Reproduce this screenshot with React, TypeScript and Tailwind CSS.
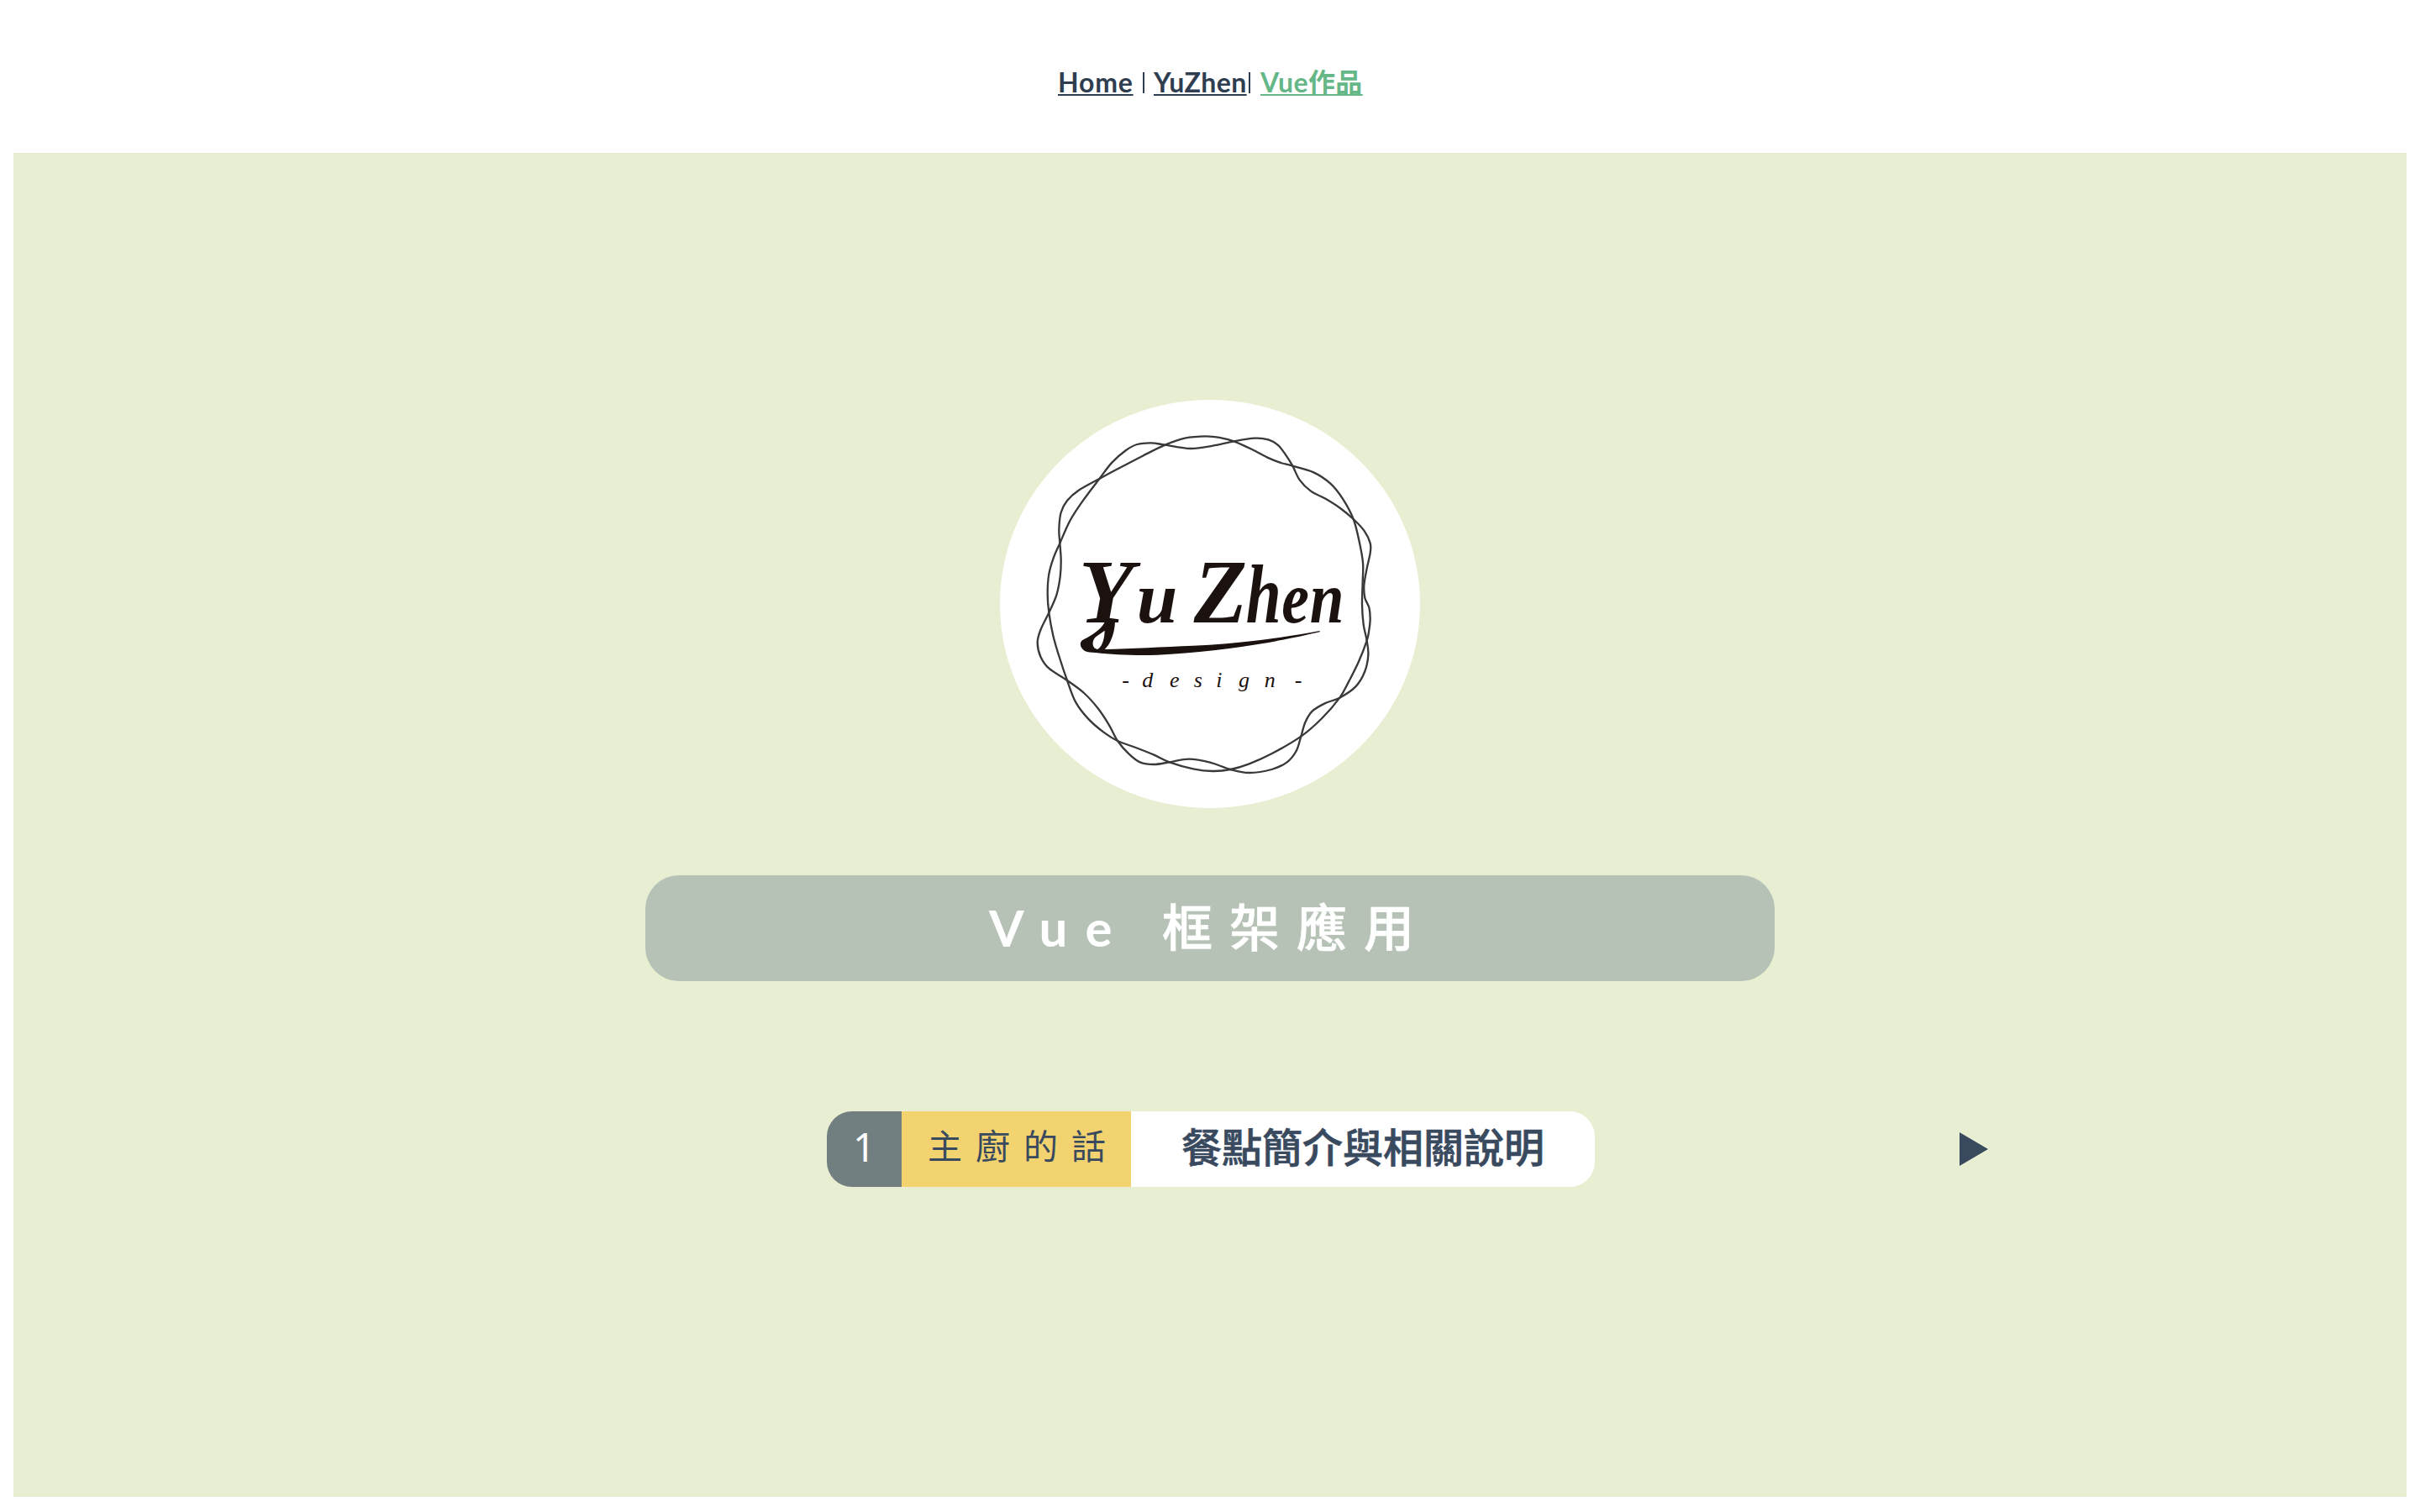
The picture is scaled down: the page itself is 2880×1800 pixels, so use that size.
const RING_ONE: [number, number][] = [
  [620, 209], [690, 185], [765, 178], [820, 184], [865, 196], [930, 225], [985, 254], [1030, 272],
  [1075, 284], [1150, 307], [1210, 347], [1255, 403], [1292, 474], [1312, 550], [1326, 630],
  [1325, 700], [1323, 780], [1328, 850], [1340, 908], [1345, 960], [1332, 1020], [1300, 1072],
  [1243, 1112], [1190, 1132], [1145, 1160], [1120, 1200], [1105, 1250], [1088, 1302], [1055, 1342],
  [1000, 1368], [920, 1380], [853, 1368], [780, 1343], [705, 1331], [635, 1342],
  [580, 1350], [530, 1342], [490, 1312], [450, 1266], [420, 1210], [380, 1150], [330, 1095],
  [270, 1050], [205, 1007], [175, 965], [164, 915], [175, 870], [205, 808], [232, 745], [245, 680],
  [248, 620], [244, 560], [241, 510], [248, 450], [270, 408], [310, 372], [385, 330], [450, 295],
  [540, 248],
];

const RING_TWO: [number, number][] = [
  [450, 1266], [400, 1235], [345, 1187], [300, 1127], [270, 1050], [240, 960],
  [220, 890], [205, 808], [200, 740], [205, 670], [222, 610], [244, 560], [280, 480], [325, 410],
  [385, 330], [430, 272], [480, 228], [520, 207], [570, 202], [620, 209], [710, 222], [790, 212],
  [865, 196], [940, 185], [988, 190], [1022, 209], [1050, 244], [1075, 284], [1100, 334],
  [1140, 374], [1190, 400], [1245, 435], [1292, 474], [1330, 515], [1352, 560], [1352, 595],
  [1340, 650], [1330, 710], [1333, 755], [1348, 790], [1352, 830], [1348, 870], [1340, 908],
  [1310, 985], [1275, 1055], [1243, 1112], [1180, 1185], [1105, 1250], [1000, 1312], [920, 1348],
  [853, 1368], [790, 1374], [720, 1366], [635, 1342], [580, 1316], [515, 1290],
];

/** Smooth closed curve through a list of points. */
function closedCurve(points: [number, number][]) {
  const n = points.length;
  let d = `M${points[0][0]} ${points[0][1]}`;
  for (let i = 0; i < n; i++) {
    const a = points[(i + n - 1) % n];
    const b = points[i];
    const c = points[(i + 1) % n];
    const e = points[(i + 2) % n];
    d += `C${b[0] + (c[0] - a[0]) / 6} ${b[1] + (c[1] - a[1]) / 6} ${c[0] - (e[0] - b[0]) / 6} ${c[1] - (e[1] - b[1]) / 6} ${c[0]} ${c[1]}`;
  }
  return d + "Z";
}

function Logo() {
  return (
    <div className="h-[486px] w-[500px] overflow-hidden rounded-[50%] bg-white">
      <svg viewBox="30 48 1500 1458" className="h-full w-full" role="img" aria-label="Yu Zhen design">
        <g fill="none" stroke="#37393a" strokeWidth="7">
          <path d={closedCurve(RING_ONE)} />
          <path d={closedCurve(RING_TWO)} />
        </g>
        <g fill="#1b120f" className="font-['Liberation_Serif'] font-bold italic">
          <text y="843" fontSize="322">
            <tspan x="311">Y</tspan>
            <tspan x="518" fontSize="262">u</tspan>
          </text>
          <text x="722" y="843" fontSize="322" textLength="190" lengthAdjust="spacingAndGlyphs">Z</text>
          <text x="908" y="843" fontSize="300" textLength="126" lengthAdjust="spacingAndGlyphs">h</text>
          <text x="1036" y="843" fontSize="262" textLength="98" lengthAdjust="spacingAndGlyphs">e</text>
          <text x="1136" y="843" fontSize="262" textLength="122" lengthAdjust="spacingAndGlyphs">n</text>
          <path d="M404 842C390 868 360 888 330 903C310 913 316 934 333 945C343 951 356 950 372 951C450 960 560 963 640 956C830 945 1010 915 1172 877V873C1000 905 860 920 720 926C610 930 500 937 404 939C430 915 440 872 441 840ZM404 872C403 900 396 930 378 939C357 936 357 906 374 893Z" fillRule="evenodd" />
        </g>
        <text y="1074" fontSize="78" fill="#1b120f" className="font-['Liberation_Serif'] italic">
          <tspan x="466">-</tspan>
          <tspan x="538">d</tspan>
          <tspan x="636">e</tspan>
          <tspan x="722">s</tspan>
          <tspan x="802">i</tspan>
          <tspan x="882">g</tspan>
          <tspan x="974">n</tspan>
          <tspan x="1082">-</tspan>
        </text>
      </svg>
    </div>
  );
}

function Nav() {
  return (
    <nav className="flex h-[182px] items-start justify-center pt-[75px] text-[32px] leading-[46px] whitespace-nowrap text-[#2f3d50]">
      <a className="w-[90px] font-bold tracking-[0.8px] underline decoration-2 underline-offset-[2px] [text-decoration-skip-ink:none]">Home</a>
      <span className="mx-[11px] mt-[11px] h-[25px] w-[2px] bg-[#2f3d50]" />
      <a className="w-[110px] font-bold tracking-[0.4px] underline decoration-2 underline-offset-[2px] [text-decoration-skip-ink:none]">YuZhen</a>
      <span className="mr-[12px] ml-[3px] mt-[11px] h-[25px] w-[2px] bg-[#2f3d50]" />
      <a className="w-[121px] font-bold tracking-[0.4px] text-[#66b788] underline decoration-2 underline-offset-[2px] [text-decoration-skip-ink:none]">Vue作品</a>
    </nav>
  );
}

export default function App() {
  return (
    <div className="h-[1800px] bg-white font-['Lato','Noto_Sans_CJK_TC',sans-serif]">
      <Nav />
      <main className="mx-4 flex h-[1600px] flex-col items-center bg-[#e8eed1] pt-[294px]">
        <Logo />
        <h1 className="mt-[80px] flex h-[126px] w-[1344px] items-center rounded-[40px] bg-[#b7c2b7] pb-[2px] pl-[409px] text-[60px] font-medium tracking-[20px] whitespace-nowrap text-white">
          <span className="w-[206px] font-bold tracking-[21px]">Vue</span>
          <span className="[-webkit-text-stroke:0.6px_white]">框架應用</span>
        </h1>
        <div className="mt-[155px] grid w-full grid-cols-[1fr_914px_1fr] items-center text-[#394a5f]">
          <div />
          <div className="mr-[-1px] ml-px flex h-[90px] overflow-hidden rounded-[30px] whitespace-nowrap">
            <span className="flex w-[89px] items-center justify-center bg-[#717f81] pb-[6px] font-['Noto_Sans'] text-[47px] font-normal text-white">1</span>
            <span className="flex w-[273px] items-center bg-[#f3d270] pb-[6px] pl-[31px] text-[41px] tracking-[16px]">主廚的話</span>
            <span className="flex flex-1 items-center bg-white pb-[5px] pl-[60px] text-[48px] font-medium [-webkit-text-stroke:0.7px_#394a5f]">餐點簡介與相關說明</span>
          </div>
          <svg viewBox="0 0 34 40" className="ml-[435px] h-10 w-[34px]" fill="#394a5f">
            <path d="M0 0L34 20L0 40Z" />
          </svg>
        </div>
      </main>
    </div>
  );
}
